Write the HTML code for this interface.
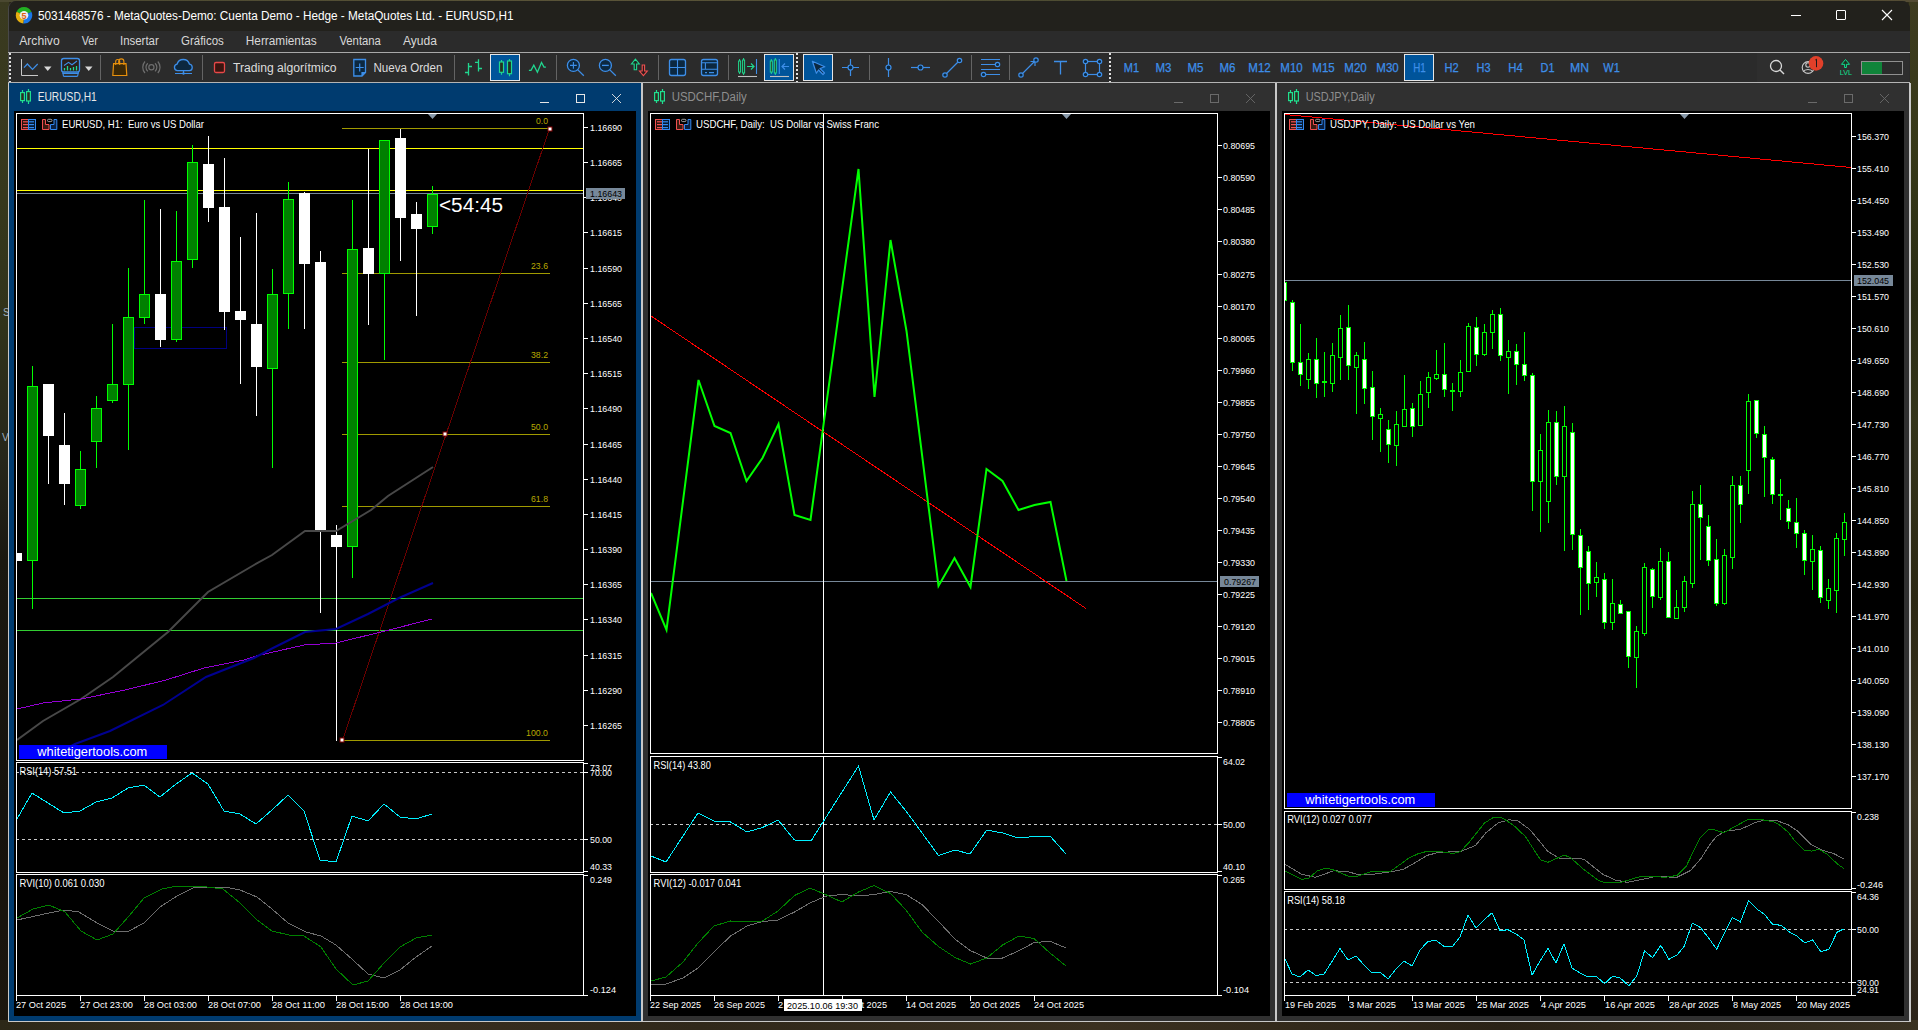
<!DOCTYPE html><html><head><meta charset="utf-8"><style>*{margin:0;padding:0;box-sizing:border-box}
html,body{width:1918px;height:1030px;overflow:hidden;background:#24231a;font-family:"Liberation Sans", sans-serif}
.a{position:absolute}
.wp{position:absolute;left:0;top:0;width:1918px;height:1030px;
background:linear-gradient(90deg,#2a2e16 0,#23260f 8px,transparent 8px,transparent 1908px,#3a3c1c 1910px,#2c2c14 1918px),linear-gradient(180deg,#46432a 0,#3a3822 2px,transparent 2px,transparent 1020px,#3a3022 1022px,#261e14 1030px),#2b2818}
.tb{color:#dcdcdc;font-size:13px;white-space:nowrap}
.mn{color:#d6d6d6;font-size:13px;white-space:nowrap}
.tf{color:#3d8ce6;font-size:14px;font-weight:bold;white-space:nowrap;text-align:center;width:32px}
svg text{font-family:"Liberation Sans", sans-serif}
</style></head><body><div class="wp"></div><div class="a" style="left:0;top:0;width:9px;height:1030px;background:linear-gradient(180deg,#3a3a20 0,#36381c 200px,#30321a 330px,#26261a 460px,#1a1810 560px,#15120c 800px,#1c160e 1030px)"></div><div class="a" style="left:1909px;top:0;width:9px;height:1030px;background:linear-gradient(180deg,#3e3c20 0,#363818 150px,#2a2c14 300px,#34341a 420px,#2c2814 600px,#3a3420 800px,#2a2218 1030px)"></div><div class="a" style="left:0;top:1020px;width:1918px;height:10px;background:linear-gradient(90deg,#2c2818 0,#3a3022 300px,#30281a 700px,#3a3020 1100px,#2a2216 1500px,#3a3222 1918px)"></div><div class="a" style="left:0;top:0;width:1918px;height:2px;background:linear-gradient(90deg,#4a4830,#5a5438 600px,#4a4a30 1200px,#544c34 1918px)"></div><svg class="a" style="left:0;top:0" width="10" height="600"><text x="3" y="316" font-size="10" fill="#a0b0c0">S</text><text x="2" y="441" font-size="10" fill="#a0b0c0">V</text></svg><div class="a" style="left:8px;top:1px;width:1902px;height:1021px;background:#2b2b2b;border-radius:8px 8px 0 0;overflow:hidden;border-left:1px solid #484848"><div class="a" style="left:0;top:0;width:1902px;height:30px;background:#22211c"></div></div><svg class="a" style="left:0;top:0" width="40" height="30"><path d="M24,15.3 L16.57,11.83 A8.2,8.2 0 0 1 31.43,11.83 Z" fill="#22b022"/><path d="M24,15.3 L31.43,11.83 A8.2,8.2 0 0 1 23.29,23.47 Z" fill="#1a78e8"/><path d="M24,15.3 L23.29,23.47 A8.2,8.2 0 0 1 16.57,11.83 Z" fill="#e8b010"/><circle cx="24" cy="15.3" r="4.3" fill="#ececec"/><text x="24" y="18.6" font-size="9" font-weight="bold" text-anchor="middle" fill="#e06010">5</text></svg><div class="a" style="left:1791px;top:15px;width:10px;height:1px;background:#fff"></div><div class="a" style="left:1836px;top:10px;width:10px;height:10px;border:1px solid #fff;border-radius:1px"></div><svg class="a" style="left:1881px;top:9px" width="12" height="12"><path d="M1,1 L11,11 M11,1 L1,11" stroke="#fff" stroke-width="1.1"/></svg><div class="a" style="left:8px;top:52px;width:1902px;height:1px;background:#a8a8a8"></div><div class="a" style="left:8px;top:82px;width:1902px;height:1px;background:#b4b4b4"></div><div class="a" style="left:1757px;top:53px;width:152px;height:29px;background:#2e2e2e"></div><svg class="a" style="left:0;top:0" width="1918" height="1030" viewBox="0 0 1918 1030"><line x1="10" y1="53" x2="10" y2="82" stroke="#e0e0e0" stroke-width="2" stroke-dasharray="2,2"/><path d="M21.5,59 V75.5 H38" fill="none" stroke="#c8c8c8" stroke-width="1"/><path d="M24,67.7 L27.4,64 L32.5,69.3 L37.7,64" fill="none" stroke="#3d8ee8" stroke-width="1.2"/><path d="M44,66.5 h7.5 l-3.75,4.5 z" fill="#d8d8d8"/><rect x="61.5" y="58.5" width="18" height="13.5" rx="2.2" fill="#2a1f1c" stroke="#3d8ee8" stroke-width="1.3"/><path d="M62.5,73.3 h16 M63.5,76.3 h14" stroke="#3d8ee8" stroke-width="1.2"/><path d="M62.8,72 L63.5,76.3 M78.5,72 L77.5,76.3" stroke="#3d8ee8" stroke-width="1.1"/><path d="M64,65.5 L68.5,62.3 L72,64.7 L77,61" fill="none" stroke="#3d8ee8" stroke-width="1.1"/><path d="M64.5,70.5v-2.5 M67.5,70.5v-4.5 M70.5,70.5v-2.5 M73.5,70.5v-3.5 M76.5,70.5v-4.5" stroke="#20d890" stroke-width="1.3"/><path d="M85,66.5 h7.5 l-3.75,4.5 z" fill="#d8d8d8"/><rect x="100" y="55" width="1" height="25" fill="#646464"/><path d="M112.8,75.5 L113.6,63.6 H126 L126.8,75.5 Z" fill="#3a2808" stroke="#e8900c" stroke-width="1.2"/><path d="M115.7,65 V61.5 a2,2 0 0 1 4,0 V65 M118.7,63.6 V61.5 a2.6,2.6 0 0 1 5.2,0 V65" fill="none" stroke="#e8900c" stroke-width="1.1"/><circle cx="151.4" cy="67.3" r="2.6" fill="none" stroke="#6e6e6e" stroke-width="1.2"/><path d="M147.8,63.2 a5.5,5.5 0 0 0 0,8.2 M155,63.2 a5.5,5.5 0 0 1 0,8.2 M145,61.5 a8.5,8.5 0 0 0 0,11.5 M157.8,61.5 a8.5,8.5 0 0 1 0,11.5" fill="none" stroke="#6e6e6e" stroke-width="1.2"/><path d="M177.5,70.7 a3.3,3.3 0 0 1 -0.5,-6.5 a6.5,6.5 0 0 1 12.5,0 a3.3,3.3 0 0 1 0,6.5 z" fill="#0c2840" stroke="#3d8ee8" stroke-width="1.3"/><path d="M183.5,70.7 v2.8 M175,73.5 h17" stroke="#3d8ee8" stroke-width="1.2"/><circle cx="183.5" cy="73.5" r="1.2" fill="#3d8ee8"/><rect x="202" y="55" width="1" height="25" fill="#646464"/><rect x="214.5" y="62.5" width="10" height="10" rx="1.5" fill="#3a1510" stroke="#e84848" stroke-width="1.3"/><path d="M353.8,59.5 h11.7 v13 l-3.5,3.5 h-8.2 z" fill="#0c2840" stroke="#3d8ee8" stroke-width="1.3"/><path d="M362,76 v-3.5 h3.5" fill="#3d8ee8" stroke="#3d8ee8" stroke-width="1.2"/><path d="M359.7,63.5 v8 M355.7,67.5 h8" stroke="#3d8ee8" stroke-width="1.2"/><rect x="454" y="55" width="1" height="25" fill="#646464"/><path d="M468.5,63 v12.6 M465,72.5 h3.5 M468.5,66.5 h3.5 M478.5,59.2 v12.3 M475,62.3 h3.5 M478.5,68.5 h3.5" stroke="#20d890" stroke-width="1.3"/><rect x="490.5" y="54.5" width="29" height="26" fill="#00549a" stroke="#e6e6e6" stroke-width="1"/><rect x="499.5" y="62" width="4" height="10.3" fill="#263020" stroke="#20d890" stroke-width="1.2"/><path d="M501.5,60v2 M501.5,72.3v2.5" stroke="#20d890" stroke-width="1.2"/><rect x="507.5" y="61" width="4" height="12.7" fill="#263020" stroke="#20d890" stroke-width="1.2"/><path d="M509.5,59v2 M509.5,73.7v2.5" stroke="#20d890" stroke-width="1.2"/><path d="M528.9,70.4 h2.1 l2.8,-5.2 l3.6,7.1 l4.1,-9.8 l2.5,4.6 h1.9" fill="none" stroke="#20d890" stroke-width="1.3"/><rect x="556" y="55" width="1" height="25" fill="#646464"/><circle cx="573.4" cy="65.4" r="6" fill="#0c2840" stroke="#3d8ee8" stroke-width="1.3"/><path d="M577.6,69.6 l6.2,6.2" stroke="#3d8ee8" stroke-width="1.3"/><path d="M570,65.4 h6.8 M573.4,62 v6.8" stroke="#3d8ee8" stroke-width="1.1"/><circle cx="605.4" cy="65.4" r="6" fill="#0c2840" stroke="#3d8ee8" stroke-width="1.3"/><path d="M609.6,69.6 l6.2,6.2" stroke="#3d8ee8" stroke-width="1.3"/><path d="M602,65.4 h6.8" stroke="#3d8ee8" stroke-width="1.3"/><path d="M634.2,69.7 V64 H631.5 L635.4,59.2 L639.3,64 H636.6 V69.7 Z" fill="#1a2a20" stroke="#20d890" stroke-width="1.1"/><path d="M642.2,65 V71 H639.5 L643.4,75.6 L647.3,71 H644.6 V65 Z" fill="#2a1a1a" stroke="#f05050" stroke-width="1.1"/><rect x="658" y="55" width="1" height="25" fill="#646464"/><rect x="669.5" y="59.5" width="16" height="16" rx="2" fill="#0c2840" stroke="#3d8ee8" stroke-width="1.3"/><path d="M677.5,60 v15 M670,67.5 h15" stroke="#3d8ee8" stroke-width="1.1"/><rect x="701.5" y="59.5" width="16" height="16" rx="2" fill="#0c2840" stroke="#3d8ee8" stroke-width="1.3"/><path d="M702,62.8 h15 M702,69.3 h15 M705.4,62.8 v6.5 M705,72.6 h2 M709,72.6 h5" stroke="#3d8ee8" stroke-width="1.1"/><rect x="728" y="55" width="1" height="25" fill="#646464"/><rect x="738.6" y="61" width="2" height="11" fill="#263020" stroke="#20d890" stroke-width="1"/><path d="M739.6,59V61 M739.6,72V74" stroke="#20d890" stroke-width="1"/><rect x="742.6" y="60" width="2" height="13" fill="#263020" stroke="#20d890" stroke-width="1"/><path d="M743.6,58V60 M743.6,73V75" stroke="#20d890" stroke-width="1"/><path d="M747,66.5h7 M751,63.5l3,3l-3,3" fill="none" stroke="#20d890" stroke-width="1.2"/><path d="M756.5,59v15" stroke="#3d8ee8" stroke-width="1.1"/><path d="M738,76.5h19" stroke="#c0c0c0" stroke-width="1.1"/><rect x="764.5" y="54.5" width="29" height="26" fill="#00549a" stroke="#e6e6e6" stroke-width="1"/><rect x="770.3" y="61" width="2" height="11" fill="#263020" stroke="#20d890" stroke-width="1"/><path d="M771.3,59V61 M771.3,72V74" stroke="#20d890" stroke-width="1"/><rect x="774.3" y="60" width="2" height="13" fill="#263020" stroke="#20d890" stroke-width="1"/><path d="M775.3,58V60 M775.3,73V75" stroke="#20d890" stroke-width="1"/><path d="M779.3,59v15" stroke="#3d8ee8" stroke-width="1.1"/><path d="M782,66.5h7 M785,63.5l-3,3l3,3" fill="none" stroke="#3d8ee8" stroke-width="1.2"/><path d="M770,76.5h19" stroke="#c0c0c0" stroke-width="1.1"/><line x1="797" y1="53" x2="797" y2="82" stroke="#e0e0e0" stroke-width="2" stroke-dasharray="2,2"/><rect x="803.5" y="54.5" width="29" height="26" fill="#00549a" stroke="#e6e6e6" stroke-width="1"/><path d="M812.4,61.3 L824.8,66.8 L820,68.5 L824.5,73 L823,74.5 L818.5,70 L816.4,73.3 Z" fill="#0c2840" stroke="#3d8ee8" stroke-width="1.2" stroke-linejoin="round"/><path d="M850.5,59v17 M842,67.5h17" stroke="#3d8ee8" stroke-width="1.2"/><circle cx="850.5" cy="67.5" r="2.5" fill="#0c2840" stroke="#3d8ee8" stroke-width="1.2"/><rect x="869" y="55" width="1" height="25" fill="#646464"/><path d="M888.5,58v19" stroke="#3d8ee8" stroke-width="1.2"/><circle cx="888.5" cy="67.5" r="2.5" fill="#0c2840" stroke="#3d8ee8" stroke-width="1.2"/><path d="M911,67.5h19" stroke="#3d8ee8" stroke-width="1.2"/><circle cx="920.5" cy="67.5" r="2.5" fill="#0c2840" stroke="#3d8ee8" stroke-width="1.2"/><path d="M945,75 L960,60" stroke="#3d8ee8" stroke-width="1.2"/><circle cx="945" cy="75" r="2.2" fill="#0c2840" stroke="#3d8ee8" stroke-width="1.2"/><circle cx="959.5" cy="60.5" r="2.2" fill="#0c2840" stroke="#3d8ee8" stroke-width="1.2"/><rect x="971" y="55" width="1" height="25" fill="#646464"/><path d="M981,59.5h19 M981,64.5h15 M981,69.5h19 M983,74.5h17" stroke="#3d8ee8" stroke-width="1.2"/><circle cx="997.5" cy="64.5" r="2.2" fill="#0c2840" stroke="#3d8ee8" stroke-width="1.2"/><circle cx="983.5" cy="74.5" r="2.2" fill="#0c2840" stroke="#3d8ee8" stroke-width="1.2"/><rect x="1009" y="55" width="1" height="25" fill="#646464"/><path d="M1021,75 L1036,60 M1030.5,61.5h4.5v4.5" fill="none" stroke="#3d8ee8" stroke-width="1.2"/><circle cx="1021" cy="75" r="2.2" fill="#0c2840" stroke="#3d8ee8" stroke-width="1.2"/><circle cx="1036" cy="60" r="2.2" fill="#0c2840" stroke="#3d8ee8" stroke-width="1.2"/><path d="M1054,61.5h13 M1060.5,61.5v13" stroke="#3d8ee8" stroke-width="1.3"/><rect x="1085.5" y="61.5" width="14" height="13" fill="none" stroke="#3d8ee8" stroke-width="1.2"/><circle cx="1085.5" cy="61.5" r="2.2" fill="#0c2840" stroke="#3d8ee8" stroke-width="1.2"/><circle cx="1099.5" cy="61.5" r="2.2" fill="#0c2840" stroke="#3d8ee8" stroke-width="1.2"/><circle cx="1085.5" cy="74.5" r="2.2" fill="#0c2840" stroke="#3d8ee8" stroke-width="1.2"/><circle cx="1099.5" cy="74.5" r="2.2" fill="#0c2840" stroke="#3d8ee8" stroke-width="1.2"/><line x1="1110" y1="53" x2="1110" y2="82" stroke="#e0e0e0" stroke-width="2" stroke-dasharray="2,2"/><rect x="1404.5" y="54.5" width="29" height="26" fill="#00549a" stroke="#e6e6e6" stroke-width="1"/><circle cx="1776" cy="66" r="5.5" fill="none" stroke="#d8d8d8" stroke-width="1.3"/><path d="M1780,70 l4,4" stroke="#d8d8d8" stroke-width="1.4"/><circle cx="1808.1" cy="67.5" r="5.9" fill="none" stroke="#c8c8c8" stroke-width="1.1"/><circle cx="1808" cy="65" r="2.2" fill="none" stroke="#c8c8c8" stroke-width="1.1"/><path d="M1803,71.8 a5.5,4 0 0 1 10,0" fill="none" stroke="#c8c8c8" stroke-width="1.1"/><circle cx="1816" cy="63.4" r="7.3" fill="#e0402a"/><path d="M1815.3,60 l1.2,-0.8 v8" fill="none" stroke="#1a1a1a" stroke-width="1"/><path d="M1844.6,67.5 V64.3 H1841.5 L1845.5,59.5 L1849.5,64.3 H1846.4 V67.5 Z" fill="#1a3020" stroke="#10e090" stroke-width="1"/><text x="1839.7" y="74.8" font-size="7.5" fill="#10e090" textLength="12.3" lengthAdjust="spacingAndGlyphs">LVL</text><rect x="1861.5" y="61.5" width="41" height="13" fill="#2b2b2b" stroke="#909090" stroke-width="1"/><rect x="1862" y="62" width="20" height="12" fill="#10843a"/></svg><div class="a" style="left:8px;top:83px;width:635px;height:939px;background:#003b6f;border-left:1px solid #c8c8c8;border-right:2px solid #c8c8c8;border-bottom:1px solid #c8c8c8"></div><div class="a" style="left:14px;top:111px;width:622px;height:905px;background:#000"></div><div class="a" style="left:643px;top:83px;width:634px;height:939px;background:#303030;border-right:2px solid #c8c8c8;border-bottom:1px solid #c8c8c8"></div><div class="a" style="left:648px;top:111px;width:622px;height:905px;background:#000"></div><div class="a" style="left:1277px;top:83px;width:634px;height:939px;background:#303030;border-right:2px solid #c8c8c8;border-bottom:1px solid #c8c8c8"></div><div class="a" style="left:1282px;top:111px;width:622px;height:905px;background:#000"></div><svg class="a" style="left:19px;top:88px" width="14" height="17"><rect x="1.6" y="4.6" width="3.8" height="8" fill="#2a3020" stroke="#20e090" stroke-width="1.2"/><path d="M3.5,2v2.6 M3.5,12.6v2.4" stroke="#20e090" stroke-width="1.2"/><rect x="7.6" y="3.6" width="3.8" height="9.4" fill="#2a3020" stroke="#20e090" stroke-width="1.2"/><path d="M9.5,1v2.6 M9.5,13v3" stroke="#20e090" stroke-width="1.2"/></svg><svg class="a" style="left:653px;top:88px" width="14" height="17"><rect x="1.6" y="4.6" width="3.8" height="8" fill="#2a3020" stroke="#20e090" stroke-width="1.2"/><path d="M3.5,2v2.6 M3.5,12.6v2.4" stroke="#20e090" stroke-width="1.2"/><rect x="7.6" y="3.6" width="3.8" height="9.4" fill="#2a3020" stroke="#20e090" stroke-width="1.2"/><path d="M9.5,1v2.6 M9.5,13v3" stroke="#20e090" stroke-width="1.2"/></svg><svg class="a" style="left:1287px;top:88px" width="14" height="17"><rect x="1.6" y="4.6" width="3.8" height="8" fill="#2a3020" stroke="#20e090" stroke-width="1.2"/><path d="M3.5,2v2.6 M3.5,12.6v2.4" stroke="#20e090" stroke-width="1.2"/><rect x="7.6" y="3.6" width="3.8" height="9.4" fill="#2a3020" stroke="#20e090" stroke-width="1.2"/><path d="M9.5,1v2.6 M9.5,13v3" stroke="#20e090" stroke-width="1.2"/></svg><svg class="a" style="left:536px;top:88px" width="90" height="18"><path d="M4,14.5h9" stroke="#e6e6e6" stroke-width="1"/><rect x="40.5" y="6.5" width="8" height="8" fill="none" stroke="#e6e6e6" stroke-width="1"/><path d="M76,6 L85,15 M85,6 L76,15" stroke="#e6e6e6" stroke-width="0.9"/></svg><svg class="a" style="left:1170px;top:88px" width="90" height="18"><path d="M4,14.5h9" stroke="#6a6a6a" stroke-width="1"/><rect x="40.5" y="6.5" width="8" height="8" fill="none" stroke="#6a6a6a" stroke-width="1"/><path d="M76,6 L85,15 M85,6 L76,15" stroke="#6a6a6a" stroke-width="0.9"/></svg><svg class="a" style="left:1804px;top:88px" width="90" height="18"><path d="M4,14.5h9" stroke="#6a6a6a" stroke-width="1"/><rect x="40.5" y="6.5" width="8" height="8" fill="none" stroke="#6a6a6a" stroke-width="1"/><path d="M76,6 L85,15 M85,6 L76,15" stroke="#6a6a6a" stroke-width="0.9"/></svg><svg class="a" style="left:0;top:0" width="1918" height="1030" viewBox="0 0 1918 1030" shape-rendering="auto"><rect x="16" y="113" width="568" height="1" fill="#ffffff" /><rect x="16" y="760" width="568" height="1" fill="#ffffff" /><rect x="16" y="113" width="1" height="648" fill="#ffffff" /><rect x="583" y="113" width="1" height="648" fill="#ffffff" /><rect x="16" y="762" width="568" height="1" fill="#ffffff" /><rect x="16" y="872" width="568" height="1" fill="#ffffff" /><rect x="16" y="762" width="1" height="111" fill="#ffffff" /><rect x="583" y="762" width="1" height="111" fill="#ffffff" /><rect x="16" y="874" width="568" height="1" fill="#ffffff" /><rect x="16" y="995" width="568" height="1" fill="#ffffff" /><rect x="16" y="874" width="1" height="122" fill="#ffffff" /><rect x="583" y="874" width="1" height="122" fill="#ffffff" /><clipPath id="ce"><rect x="17" y="114" width="566" height="646"/></clipPath><g clip-path="url(#ce)"><rect x="17" y="148" width="566" height="1" fill="#ffff00" /><rect x="17" y="190" width="566" height="1" fill="#ffff00" /><rect x="17" y="193" width="566" height="1" fill="#778899" /><rect x="17" y="598" width="566" height="1" fill="#32cd32" /><rect x="17" y="630" width="566" height="1" fill="#32cd32" /><rect x="134.5" y="327.5" width="92" height="21" fill="none" stroke="#000080" stroke-width="1"/><rect x="342" y="128" width="208" height="1" fill="#a09a00" /><rect x="342" y="273" width="208" height="1" fill="#a09a00" /><rect x="342" y="362" width="208" height="1" fill="#a09a00" /><rect x="342" y="434" width="208" height="1" fill="#a09a00" /><rect x="342" y="506" width="208" height="1" fill="#a09a00" /><rect x="342" y="740" width="208" height="1" fill="#a09a00" /><line x1="549.5" y1="128.5" x2="342.5" y2="740.5" stroke="#6a0000" stroke-width="1" shape-rendering="crispEdges"/><rect x="16" y="553" width="1" height="8" fill="#ffffff" /><rect x="11" y="553" width="11" height="8" fill="#ffffff" /><rect x="32" y="366" width="1" height="243" fill="#00ff00" /><rect x="27" y="386" width="11" height="175" fill="#00ff00" /><rect x="28" y="387" width="9" height="173" fill="#008000" /><rect x="48" y="384" width="1" height="100" fill="#ffffff" /><rect x="43" y="384" width="11" height="52" fill="#ffffff" /><rect x="64" y="413" width="1" height="92" fill="#ffffff" /><rect x="59" y="445" width="11" height="39" fill="#ffffff" /><rect x="80" y="451" width="1" height="58" fill="#00ff00" /><rect x="75" y="469" width="11" height="37" fill="#00ff00" /><rect x="76" y="470" width="9" height="35" fill="#008000" /><rect x="96" y="396" width="1" height="72" fill="#00ff00" /><rect x="91" y="408" width="11" height="34" fill="#00ff00" /><rect x="92" y="409" width="9" height="32" fill="#008000" /><rect x="112" y="324" width="1" height="79" fill="#00ff00" /><rect x="107" y="384" width="11" height="17" fill="#00ff00" /><rect x="108" y="385" width="9" height="15" fill="#008000" /><rect x="128" y="268" width="1" height="182" fill="#00ff00" /><rect x="123" y="317" width="11" height="68" fill="#00ff00" /><rect x="124" y="318" width="9" height="66" fill="#008000" /><rect x="144" y="200" width="1" height="124" fill="#00ff00" /><rect x="139" y="294" width="11" height="24" fill="#00ff00" /><rect x="140" y="295" width="9" height="22" fill="#008000" /><rect x="160" y="209" width="1" height="138" fill="#ffffff" /><rect x="155" y="294" width="11" height="46" fill="#ffffff" /><rect x="176" y="211" width="1" height="131" fill="#00ff00" /><rect x="171" y="261" width="11" height="79" fill="#00ff00" /><rect x="172" y="262" width="9" height="77" fill="#008000" /><rect x="192" y="145" width="1" height="123" fill="#00ff00" /><rect x="187" y="162" width="11" height="98" fill="#00ff00" /><rect x="188" y="163" width="9" height="96" fill="#008000" /><rect x="208" y="136" width="1" height="86" fill="#ffffff" /><rect x="203" y="164" width="11" height="44" fill="#ffffff" /><rect x="224" y="158" width="1" height="172" fill="#ffffff" /><rect x="219" y="207" width="11" height="105" fill="#ffffff" /><rect x="240" y="237" width="1" height="147" fill="#ffffff" /><rect x="235" y="311" width="11" height="9" fill="#ffffff" /><rect x="256" y="213" width="1" height="203" fill="#ffffff" /><rect x="251" y="324" width="11" height="43" fill="#ffffff" /><rect x="272" y="269" width="1" height="199" fill="#00ff00" /><rect x="267" y="294" width="11" height="75" fill="#00ff00" /><rect x="268" y="295" width="9" height="73" fill="#008000" /><rect x="288" y="182" width="1" height="147" fill="#00ff00" /><rect x="283" y="199" width="11" height="95" fill="#00ff00" /><rect x="284" y="200" width="9" height="93" fill="#008000" /><rect x="304" y="192" width="1" height="137" fill="#ffffff" /><rect x="299" y="193" width="11" height="71" fill="#ffffff" /><rect x="320" y="251" width="1" height="362" fill="#ffffff" /><rect x="315" y="262" width="11" height="268" fill="#ffffff" /><rect x="336" y="525" width="1" height="216" fill="#ffffff" /><rect x="331" y="535" width="11" height="12" fill="#ffffff" /><rect x="352" y="200" width="1" height="378" fill="#00ff00" /><rect x="347" y="249" width="11" height="298" fill="#00ff00" /><rect x="348" y="250" width="9" height="296" fill="#008000" /><rect x="368" y="149" width="1" height="176" fill="#ffffff" /><rect x="363" y="248" width="11" height="26" fill="#ffffff" /><rect x="384" y="140" width="1" height="220" fill="#00ff00" /><rect x="379" y="140" width="11" height="134" fill="#00ff00" /><rect x="380" y="141" width="9" height="132" fill="#008000" /><rect x="400" y="129" width="1" height="132" fill="#ffffff" /><rect x="395" y="138" width="11" height="80" fill="#ffffff" /><rect x="416" y="202" width="1" height="114" fill="#ffffff" /><rect x="411" y="214" width="11" height="15" fill="#ffffff" /><rect x="432" y="186" width="1" height="48" fill="#00ff00" /><rect x="427" y="194" width="11" height="33" fill="#00ff00" /><rect x="428" y="195" width="9" height="31" fill="#008000" /><polyline points="17,740 43,721 81,699 113,677 168,632 208,592 254,565 272,555 305,531 336,531 371,510 388,496 433,467" fill="none" stroke="#484848" stroke-width="2" stroke-linejoin="miter" /><polyline points="17,709 43,703 81,699 125,690 166,680 204,668 244,660 256,656 304,645 336,643 385,631 432,619" fill="none" stroke="#9400d3" stroke-width="1" stroke-linejoin="miter" shape-rendering="crispEdges"/><polyline points="60,752 75,744 110,731 163,705 206,677 254,658 273,648 305,632 336,629 368,614 399,598 433,583" fill="none" stroke="#000090" stroke-width="2" stroke-linejoin="miter" /><rect x="548" y="127" width="4" height="4" fill="#ffffff" stroke="#800000" stroke-width="1"/><rect x="443" y="432" width="4" height="4" fill="#ffffff" stroke="#800000" stroke-width="1"/><rect x="340" y="738" width="4" height="4" fill="#ffffff" stroke="#800000" stroke-width="1"/><text x="548" y="124" fill="#b8a800" font-size="9.8" text-anchor="end" textLength="12" lengthAdjust="spacingAndGlyphs" xml:space="preserve" >0.0</text><text x="548" y="269" fill="#b8a800" font-size="9.8" text-anchor="end" textLength="17" lengthAdjust="spacingAndGlyphs" xml:space="preserve" >23.6</text><text x="548" y="358" fill="#b8a800" font-size="9.8" text-anchor="end" textLength="17" lengthAdjust="spacingAndGlyphs" xml:space="preserve" >38.2</text><text x="548" y="430" fill="#b8a800" font-size="9.8" text-anchor="end" textLength="17" lengthAdjust="spacingAndGlyphs" xml:space="preserve" >50.0</text><text x="548" y="502" fill="#b8a800" font-size="9.8" text-anchor="end" textLength="17" lengthAdjust="spacingAndGlyphs" xml:space="preserve" >61.8</text><text x="548" y="736" fill="#b8a800" font-size="9.8" text-anchor="end" textLength="22" lengthAdjust="spacingAndGlyphs" xml:space="preserve" >100.0</text><text x="439" y="212" fill="#ffffff" font-size="20.5" text-anchor="start" textLength="64" lengthAdjust="spacingAndGlyphs" xml:space="preserve" >&lt;54:45</text><rect x="19" y="745" width="148" height="14" fill="#0000ff" /><text x="37.3" y="756" fill="#ffffff" font-size="12.5" text-anchor="start" textLength="110" lengthAdjust="spacingAndGlyphs" xml:space="preserve" >whitetigertools.com</text><g transform="translate(21,119)"><rect x="0.5" y="0.5" width="7" height="10" fill="#2a1410" stroke="#f05050"/><rect x="7.5" y="0.5" width="7" height="10" fill="#061a30" stroke="#3388f0"/><rect x="2" y="2.2" width="5" height="1.2" fill="#f05050"/><rect x="2" y="5" width="5" height="1.2" fill="#f05050"/><rect x="2" y="8" width="5" height="1.2" fill="#f05050"/><rect x="8" y="2.2" width="5" height="1.2" fill="#3388f0"/><rect x="8" y="5" width="5" height="1.2" fill="#3388f0"/><rect x="8" y="8" width="5" height="1.2" fill="#3388f0"/><path d="M21.5,0.5 h3 v5 h3.5 v5 h-6.5 z" fill="#3a1a10" stroke="#f05050"/><path d="M29.5,10.5 v-5 h3.5 v-5 h2.8 v10 z" fill="#0a2040" stroke="#3388f0"/><rect x="26.5" y="0.3" width="4.5" height="2.3" rx="1.1" fill="none" stroke="#b0b0b0" stroke-width="0.9"/></g><text x="62" y="128" fill="#ffffff" font-size="10.5" text-anchor="start" textLength="142" lengthAdjust="spacingAndGlyphs" xml:space="preserve" >EURUSD, H1:  Euro vs US Dollar</text><polygon points="428,114 437,114 432.5,119" fill="#8899aa"/></g><rect x="584" y="127" width="4" height="1" fill="#ffffff" /><text x="590" y="131" fill="#ffffff" font-size="9.8" text-anchor="start" textLength="32" lengthAdjust="spacingAndGlyphs" xml:space="preserve" >1.16690</text><rect x="584" y="162" width="4" height="1" fill="#ffffff" /><text x="590" y="166" fill="#ffffff" font-size="9.8" text-anchor="start" textLength="32" lengthAdjust="spacingAndGlyphs" xml:space="preserve" >1.16665</text><rect x="584" y="197" width="4" height="1" fill="#ffffff" /><text x="590" y="201" fill="#ffffff" font-size="9.8" text-anchor="start" textLength="32" lengthAdjust="spacingAndGlyphs" xml:space="preserve" >1.16640</text><rect x="584" y="232" width="4" height="1" fill="#ffffff" /><text x="590" y="236" fill="#ffffff" font-size="9.8" text-anchor="start" textLength="32" lengthAdjust="spacingAndGlyphs" xml:space="preserve" >1.16615</text><rect x="584" y="268" width="4" height="1" fill="#ffffff" /><text x="590" y="272" fill="#ffffff" font-size="9.8" text-anchor="start" textLength="32" lengthAdjust="spacingAndGlyphs" xml:space="preserve" >1.16590</text><rect x="584" y="303" width="4" height="1" fill="#ffffff" /><text x="590" y="307" fill="#ffffff" font-size="9.8" text-anchor="start" textLength="32" lengthAdjust="spacingAndGlyphs" xml:space="preserve" >1.16565</text><rect x="584" y="338" width="4" height="1" fill="#ffffff" /><text x="590" y="342" fill="#ffffff" font-size="9.8" text-anchor="start" textLength="32" lengthAdjust="spacingAndGlyphs" xml:space="preserve" >1.16540</text><rect x="584" y="373" width="4" height="1" fill="#ffffff" /><text x="590" y="377" fill="#ffffff" font-size="9.8" text-anchor="start" textLength="32" lengthAdjust="spacingAndGlyphs" xml:space="preserve" >1.16515</text><rect x="584" y="408" width="4" height="1" fill="#ffffff" /><text x="590" y="412" fill="#ffffff" font-size="9.8" text-anchor="start" textLength="32" lengthAdjust="spacingAndGlyphs" xml:space="preserve" >1.16490</text><rect x="584" y="444" width="4" height="1" fill="#ffffff" /><text x="590" y="448" fill="#ffffff" font-size="9.8" text-anchor="start" textLength="32" lengthAdjust="spacingAndGlyphs" xml:space="preserve" >1.16465</text><rect x="584" y="479" width="4" height="1" fill="#ffffff" /><text x="590" y="483" fill="#ffffff" font-size="9.8" text-anchor="start" textLength="32" lengthAdjust="spacingAndGlyphs" xml:space="preserve" >1.16440</text><rect x="584" y="514" width="4" height="1" fill="#ffffff" /><text x="590" y="518" fill="#ffffff" font-size="9.8" text-anchor="start" textLength="32" lengthAdjust="spacingAndGlyphs" xml:space="preserve" >1.16415</text><rect x="584" y="549" width="4" height="1" fill="#ffffff" /><text x="590" y="553" fill="#ffffff" font-size="9.8" text-anchor="start" textLength="32" lengthAdjust="spacingAndGlyphs" xml:space="preserve" >1.16390</text><rect x="584" y="584" width="4" height="1" fill="#ffffff" /><text x="590" y="588" fill="#ffffff" font-size="9.8" text-anchor="start" textLength="32" lengthAdjust="spacingAndGlyphs" xml:space="preserve" >1.16365</text><rect x="584" y="619" width="4" height="1" fill="#ffffff" /><text x="590" y="623" fill="#ffffff" font-size="9.8" text-anchor="start" textLength="32" lengthAdjust="spacingAndGlyphs" xml:space="preserve" >1.16340</text><rect x="584" y="655" width="4" height="1" fill="#ffffff" /><text x="590" y="659" fill="#ffffff" font-size="9.8" text-anchor="start" textLength="32" lengthAdjust="spacingAndGlyphs" xml:space="preserve" >1.16315</text><rect x="584" y="690" width="4" height="1" fill="#ffffff" /><text x="590" y="694" fill="#ffffff" font-size="9.8" text-anchor="start" textLength="32" lengthAdjust="spacingAndGlyphs" xml:space="preserve" >1.16290</text><rect x="584" y="725" width="4" height="1" fill="#ffffff" /><text x="590" y="729" fill="#ffffff" font-size="9.8" text-anchor="start" textLength="32" lengthAdjust="spacingAndGlyphs" xml:space="preserve" >1.16265</text><rect x="586" y="188" width="39" height="11" fill="#778899" /><text x="590" y="197" fill="#000000" font-size="9.8" text-anchor="start" textLength="32" lengthAdjust="spacingAndGlyphs" xml:space="preserve" >1.16643</text><clipPath id="cer"><rect x="17" y="763" width="566" height="109"/></clipPath><g clip-path="url(#cer)"><line x1="16" y1="772.5" x2="583" y2="772.5" stroke="#c8c8c8" stroke-width="1" stroke-dasharray="3,3"/><line x1="16" y1="839.5" x2="583" y2="839.5" stroke="#c8c8c8" stroke-width="1" stroke-dasharray="3,3"/><polyline points="17,819 32,793 48,803 64,813 80,811 96,802 112,798 128,788 144,785 160,797 176,784 192,773 208,784 224,811 240,814 256,824 272,810 288,795 304,811 320,860 336,862 352,816 368,821 384,804 400,817 416,819 432,814" fill="none" stroke="#00f0ff" stroke-width="1" stroke-linejoin="miter" shape-rendering="crispEdges"/><text x="19.5" y="775" fill="#ffffff" font-size="10.5" text-anchor="start" textLength="57.5" lengthAdjust="spacingAndGlyphs" xml:space="preserve" >RSI(14) 57.51</text></g><rect x="584" y="763" width="4" height="1" fill="#ffffff" /><rect x="584" y="772" width="4" height="1" fill="#ffffff" /><rect x="584" y="839" width="4" height="1" fill="#ffffff" /><rect x="584" y="871" width="4" height="1" fill="#ffffff" /><text x="590" y="771" fill="#ffffff" font-size="9.8" text-anchor="start" textLength="22" lengthAdjust="spacingAndGlyphs" xml:space="preserve" >73.07</text><text x="590" y="776" fill="#ffffff" font-size="9.8" text-anchor="start" textLength="22" lengthAdjust="spacingAndGlyphs" xml:space="preserve" >70.00</text><text x="590" y="843" fill="#ffffff" font-size="9.8" text-anchor="start" textLength="22" lengthAdjust="spacingAndGlyphs" xml:space="preserve" >50.00</text><text x="590" y="870" fill="#ffffff" font-size="9.8" text-anchor="start" textLength="22" lengthAdjust="spacingAndGlyphs" xml:space="preserve" >40.33</text><clipPath id="cev"><rect x="17" y="875" width="566" height="120"/></clipPath><g clip-path="url(#cev)"><polyline points="17,920 49,913 64,910 79,912 97,923 113,931 127,932 144,923 160,907 177,896 193,888 208,887 225,887 240,890 257,897 272,909 288,923 306,932 321,936 336,945 353,960 368,974 384,978 400,970 416,957 432,946" fill="none" stroke="#6e6e6e" stroke-width="1" stroke-linejoin="miter" shape-rendering="crispEdges"/><polyline points="17,918 33,909 49,905 65,912 81,931 97,940 113,934 129,916 144,898 162,889 177,886 199,886 223,889 240,903 257,920 272,931 289,935 304,936 321,947 336,969 353,985 368,981 384,963 400,947 416,938 432,935" fill="none" stroke="#008000" stroke-width="1" stroke-linejoin="miter" shape-rendering="crispEdges"/><text x="19.5" y="887" fill="#ffffff" font-size="10.5" text-anchor="start" textLength="85" lengthAdjust="spacingAndGlyphs" xml:space="preserve" >RVI(10) 0.061 0.030</text></g><rect x="584" y="875" width="4" height="1" fill="#ffffff" /><rect x="584" y="995" width="4" height="1" fill="#ffffff" /><text x="590" y="883" fill="#ffffff" font-size="9.8" text-anchor="start" textLength="22" lengthAdjust="spacingAndGlyphs" xml:space="preserve" >0.249</text><text x="590" y="993" fill="#ffffff" font-size="9.8" text-anchor="start" textLength="26" lengthAdjust="spacingAndGlyphs" xml:space="preserve" >-0.124</text><rect x="16" y="995" width="1" height="6" fill="#ffffff" /><text x="16" y="1008" fill="#ffffff" font-size="9.8" text-anchor="start" textLength="50" lengthAdjust="spacingAndGlyphs" xml:space="preserve" >27 Oct 2025</text><rect x="80" y="995" width="1" height="6" fill="#ffffff" /><text x="80" y="1008" fill="#ffffff" font-size="9.8" text-anchor="start" textLength="53" lengthAdjust="spacingAndGlyphs" xml:space="preserve" >27 Oct 23:00</text><rect x="144" y="995" width="1" height="6" fill="#ffffff" /><text x="144" y="1008" fill="#ffffff" font-size="9.8" text-anchor="start" textLength="53" lengthAdjust="spacingAndGlyphs" xml:space="preserve" >28 Oct 03:00</text><rect x="208" y="995" width="1" height="6" fill="#ffffff" /><text x="208" y="1008" fill="#ffffff" font-size="9.8" text-anchor="start" textLength="53" lengthAdjust="spacingAndGlyphs" xml:space="preserve" >28 Oct 07:00</text><rect x="272" y="995" width="1" height="6" fill="#ffffff" /><text x="272" y="1008" fill="#ffffff" font-size="9.8" text-anchor="start" textLength="53" lengthAdjust="spacingAndGlyphs" xml:space="preserve" >28 Oct 11:00</text><rect x="336" y="995" width="1" height="6" fill="#ffffff" /><text x="336" y="1008" fill="#ffffff" font-size="9.8" text-anchor="start" textLength="53" lengthAdjust="spacingAndGlyphs" xml:space="preserve" >28 Oct 15:00</text><rect x="400" y="995" width="1" height="6" fill="#ffffff" /><text x="400" y="1008" fill="#ffffff" font-size="9.8" text-anchor="start" textLength="53" lengthAdjust="spacingAndGlyphs" xml:space="preserve" >28 Oct 19:00</text><rect x="650" y="113" width="568" height="1" fill="#ffffff" /><rect x="650" y="753" width="568" height="1" fill="#ffffff" /><rect x="650" y="113" width="1" height="641" fill="#ffffff" /><rect x="1217" y="113" width="1" height="641" fill="#ffffff" /><rect x="650" y="756" width="568" height="1" fill="#ffffff" /><rect x="650" y="872" width="568" height="1" fill="#ffffff" /><rect x="650" y="756" width="1" height="117" fill="#ffffff" /><rect x="1217" y="756" width="1" height="117" fill="#ffffff" /><rect x="650" y="874" width="568" height="1" fill="#ffffff" /><rect x="650" y="995" width="568" height="1" fill="#ffffff" /><rect x="650" y="874" width="1" height="122" fill="#ffffff" /><rect x="1217" y="874" width="1" height="122" fill="#ffffff" /><clipPath id="cc"><rect x="651" y="114" width="566" height="639"/></clipPath><g clip-path="url(#cc)"><rect x="651" y="581" width="566" height="1" fill="#778899" /><rect x="823" y="114" width="1" height="640" fill="#ffffff" /><line x1="651" y1="316" x2="1086" y2="608.5" stroke="#ff0000" stroke-width="1" shape-rendering="crispEdges"/><polyline points="651,593 666.5,630 698.5,380 714.5,426 730.5,433 746.5,481 762.5,458 778.5,424 794.5,515 810.5,520 858.5,169 874.5,397 890.5,240 906.5,331 938.5,586 954.5,558 970.5,587 986.5,469 1002.5,481 1018.5,510 1034.5,505 1050.5,502 1066.5,581" fill="none" stroke="#00ff00" stroke-width="2" stroke-linejoin="miter" /><g transform="translate(655,119)"><rect x="0.5" y="0.5" width="7" height="10" fill="#2a1410" stroke="#f05050"/><rect x="7.5" y="0.5" width="7" height="10" fill="#061a30" stroke="#3388f0"/><rect x="2" y="2.2" width="5" height="1.2" fill="#f05050"/><rect x="2" y="5" width="5" height="1.2" fill="#f05050"/><rect x="2" y="8" width="5" height="1.2" fill="#f05050"/><rect x="8" y="2.2" width="5" height="1.2" fill="#3388f0"/><rect x="8" y="5" width="5" height="1.2" fill="#3388f0"/><rect x="8" y="8" width="5" height="1.2" fill="#3388f0"/><path d="M21.5,0.5 h3 v5 h3.5 v5 h-6.5 z" fill="#3a1a10" stroke="#f05050"/><path d="M29.5,10.5 v-5 h3.5 v-5 h2.8 v10 z" fill="#0a2040" stroke="#3388f0"/><rect x="26.5" y="0.3" width="4.5" height="2.3" rx="1.1" fill="none" stroke="#b0b0b0" stroke-width="0.9"/></g><text x="696" y="128" fill="#ffffff" font-size="10.5" text-anchor="start" textLength="183" lengthAdjust="spacingAndGlyphs" xml:space="preserve" >USDCHF, Daily:  US Dollar vs Swiss Franc</text><polygon points="1062,114 1071,114 1066.5,119" fill="#8899aa"/></g><rect x="1218" y="145" width="4" height="1" fill="#ffffff" /><text x="1223" y="149" fill="#ffffff" font-size="9.8" text-anchor="start" textLength="32" lengthAdjust="spacingAndGlyphs" xml:space="preserve" >0.80695</text><rect x="1218" y="177" width="4" height="1" fill="#ffffff" /><text x="1223" y="181" fill="#ffffff" font-size="9.8" text-anchor="start" textLength="32" lengthAdjust="spacingAndGlyphs" xml:space="preserve" >0.80590</text><rect x="1218" y="209" width="4" height="1" fill="#ffffff" /><text x="1223" y="213" fill="#ffffff" font-size="9.8" text-anchor="start" textLength="32" lengthAdjust="spacingAndGlyphs" xml:space="preserve" >0.80485</text><rect x="1218" y="241" width="4" height="1" fill="#ffffff" /><text x="1223" y="245" fill="#ffffff" font-size="9.8" text-anchor="start" textLength="32" lengthAdjust="spacingAndGlyphs" xml:space="preserve" >0.80380</text><rect x="1218" y="274" width="4" height="1" fill="#ffffff" /><text x="1223" y="278" fill="#ffffff" font-size="9.8" text-anchor="start" textLength="32" lengthAdjust="spacingAndGlyphs" xml:space="preserve" >0.80275</text><rect x="1218" y="306" width="4" height="1" fill="#ffffff" /><text x="1223" y="310" fill="#ffffff" font-size="9.8" text-anchor="start" textLength="32" lengthAdjust="spacingAndGlyphs" xml:space="preserve" >0.80170</text><rect x="1218" y="338" width="4" height="1" fill="#ffffff" /><text x="1223" y="342" fill="#ffffff" font-size="9.8" text-anchor="start" textLength="32" lengthAdjust="spacingAndGlyphs" xml:space="preserve" >0.80065</text><rect x="1218" y="370" width="4" height="1" fill="#ffffff" /><text x="1223" y="374" fill="#ffffff" font-size="9.8" text-anchor="start" textLength="32" lengthAdjust="spacingAndGlyphs" xml:space="preserve" >0.79960</text><rect x="1218" y="402" width="4" height="1" fill="#ffffff" /><text x="1223" y="406" fill="#ffffff" font-size="9.8" text-anchor="start" textLength="32" lengthAdjust="spacingAndGlyphs" xml:space="preserve" >0.79855</text><rect x="1218" y="434" width="4" height="1" fill="#ffffff" /><text x="1223" y="438" fill="#ffffff" font-size="9.8" text-anchor="start" textLength="32" lengthAdjust="spacingAndGlyphs" xml:space="preserve" >0.79750</text><rect x="1218" y="466" width="4" height="1" fill="#ffffff" /><text x="1223" y="470" fill="#ffffff" font-size="9.8" text-anchor="start" textLength="32" lengthAdjust="spacingAndGlyphs" xml:space="preserve" >0.79645</text><rect x="1218" y="498" width="4" height="1" fill="#ffffff" /><text x="1223" y="502" fill="#ffffff" font-size="9.8" text-anchor="start" textLength="32" lengthAdjust="spacingAndGlyphs" xml:space="preserve" >0.79540</text><rect x="1218" y="530" width="4" height="1" fill="#ffffff" /><text x="1223" y="534" fill="#ffffff" font-size="9.8" text-anchor="start" textLength="32" lengthAdjust="spacingAndGlyphs" xml:space="preserve" >0.79435</text><rect x="1218" y="562" width="4" height="1" fill="#ffffff" /><text x="1223" y="566" fill="#ffffff" font-size="9.8" text-anchor="start" textLength="32" lengthAdjust="spacingAndGlyphs" xml:space="preserve" >0.79330</text><rect x="1218" y="594" width="4" height="1" fill="#ffffff" /><text x="1223" y="598" fill="#ffffff" font-size="9.8" text-anchor="start" textLength="32" lengthAdjust="spacingAndGlyphs" xml:space="preserve" >0.79225</text><rect x="1218" y="626" width="4" height="1" fill="#ffffff" /><text x="1223" y="630" fill="#ffffff" font-size="9.8" text-anchor="start" textLength="32" lengthAdjust="spacingAndGlyphs" xml:space="preserve" >0.79120</text><rect x="1218" y="658" width="4" height="1" fill="#ffffff" /><text x="1223" y="662" fill="#ffffff" font-size="9.8" text-anchor="start" textLength="32" lengthAdjust="spacingAndGlyphs" xml:space="preserve" >0.79015</text><rect x="1218" y="690" width="4" height="1" fill="#ffffff" /><text x="1223" y="694" fill="#ffffff" font-size="9.8" text-anchor="start" textLength="32" lengthAdjust="spacingAndGlyphs" xml:space="preserve" >0.78910</text><rect x="1218" y="722" width="4" height="1" fill="#ffffff" /><text x="1223" y="726" fill="#ffffff" font-size="9.8" text-anchor="start" textLength="32" lengthAdjust="spacingAndGlyphs" xml:space="preserve" >0.78805</text><rect x="1220" y="576" width="39" height="11" fill="#778899" /><text x="1224" y="585" fill="#000000" font-size="9.8" text-anchor="start" textLength="32" lengthAdjust="spacingAndGlyphs" xml:space="preserve" >0.79267</text><clipPath id="ccr"><rect x="651" y="757" width="566" height="115"/></clipPath><g clip-path="url(#ccr)"><rect x="823" y="757" width="1" height="116" fill="#ffffff" /><line x1="650" y1="824.5" x2="1217" y2="824.5" stroke="#c8c8c8" stroke-width="1" stroke-dasharray="3,3"/><polyline points="651,856 666,862 698,813 714,821 730.5,822 747,832 762.5,827.5 778,820 794.5,840 811,841 858.5,766 874,820 890.5,792 906,811 938.5,855.5 955,850 970,854 986.8,830 1002.6,833 1018,838 1034,836.5 1050,836 1066,854" fill="none" stroke="#00f0ff" stroke-width="1" stroke-linejoin="miter" shape-rendering="crispEdges"/><text x="653.5" y="769" fill="#ffffff" font-size="10.5" text-anchor="start" textLength="57.3" lengthAdjust="spacingAndGlyphs" xml:space="preserve" >RSI(14) 43.80</text></g><rect x="1218" y="757" width="4" height="1" fill="#ffffff" /><rect x="1218" y="824" width="4" height="1" fill="#ffffff" /><rect x="1218" y="871" width="4" height="1" fill="#ffffff" /><text x="1223" y="765" fill="#ffffff" font-size="9.8" text-anchor="start" textLength="22" lengthAdjust="spacingAndGlyphs" xml:space="preserve" >64.02</text><text x="1223" y="828" fill="#ffffff" font-size="9.8" text-anchor="start" textLength="22" lengthAdjust="spacingAndGlyphs" xml:space="preserve" >50.00</text><text x="1223" y="870" fill="#ffffff" font-size="9.8" text-anchor="start" textLength="22" lengthAdjust="spacingAndGlyphs" xml:space="preserve" >40.10</text><clipPath id="ccv"><rect x="651" y="875" width="566" height="120"/></clipPath><g clip-path="url(#ccv)"><rect x="823" y="875" width="1" height="121" fill="#ffffff" /><polyline points="651,985 666,984 683,978 698,968 714,952 730.5,936 747,926 762.5,921.5 778,920 794.5,912 810,903 826.5,896 842,894.5 858.5,896 874,894.5 890.5,891.5 906,894.5 922,904.5 938.5,921.5 955,939 970.5,950.7 986.8,958 1002.6,958 1019,950.7 1034,942.6 1050,941.2 1066,948" fill="none" stroke="#6e6e6e" stroke-width="1" stroke-linejoin="miter" shape-rendering="crispEdges"/><polyline points="651,981 666,977 683,962 698,943 714,926 730.5,921 747,922 762.5,921 778,911 794.5,895.5 810,888 826.5,895 842,902 858.5,892 874,885.5 890.5,893.5 906,910 922,932 938.5,946.5 955,957.5 970.5,964 986.8,958 1002.6,945 1019,936 1034,938.5 1050,953 1066,966" fill="none" stroke="#008000" stroke-width="1" stroke-linejoin="miter" shape-rendering="crispEdges"/><text x="653.5" y="887" fill="#ffffff" font-size="10.5" text-anchor="start" textLength="87.8" lengthAdjust="spacingAndGlyphs" xml:space="preserve" >RVI(12) -0.017 0.041</text></g><rect x="1218" y="875" width="4" height="1" fill="#ffffff" /><rect x="1218" y="995" width="4" height="1" fill="#ffffff" /><text x="1223" y="883" fill="#ffffff" font-size="9.8" text-anchor="start" textLength="22" lengthAdjust="spacingAndGlyphs" xml:space="preserve" >0.265</text><text x="1223" y="993" fill="#ffffff" font-size="9.8" text-anchor="start" textLength="26" lengthAdjust="spacingAndGlyphs" xml:space="preserve" >-0.104</text><rect x="650" y="995" width="1" height="6" fill="#ffffff" /><text x="650" y="1008" fill="#ffffff" font-size="9.8" text-anchor="start" textLength="51" lengthAdjust="spacingAndGlyphs" xml:space="preserve" >22 Sep 2025</text><rect x="714" y="995" width="1" height="6" fill="#ffffff" /><text x="714" y="1008" fill="#ffffff" font-size="9.8" text-anchor="start" textLength="51" lengthAdjust="spacingAndGlyphs" xml:space="preserve" >26 Sep 2025</text><rect x="778" y="995" width="1" height="6" fill="#ffffff" /><text x="778" y="1008" fill="#ffffff" font-size="9.8" text-anchor="start" textLength="45" lengthAdjust="spacingAndGlyphs" xml:space="preserve" >2 Oct 2025</text><rect x="842" y="995" width="1" height="6" fill="#ffffff" /><text x="842" y="1008" fill="#ffffff" font-size="9.8" text-anchor="start" textLength="45" lengthAdjust="spacingAndGlyphs" xml:space="preserve" >8 Oct 2025</text><rect x="906" y="995" width="1" height="6" fill="#ffffff" /><text x="906" y="1008" fill="#ffffff" font-size="9.8" text-anchor="start" textLength="50" lengthAdjust="spacingAndGlyphs" xml:space="preserve" >14 Oct 2025</text><rect x="970" y="995" width="1" height="6" fill="#ffffff" /><text x="970" y="1008" fill="#ffffff" font-size="9.8" text-anchor="start" textLength="50" lengthAdjust="spacingAndGlyphs" xml:space="preserve" >20 Oct 2025</text><rect x="1034" y="995" width="1" height="6" fill="#ffffff" /><text x="1034" y="1008" fill="#ffffff" font-size="9.8" text-anchor="start" textLength="50" lengthAdjust="spacingAndGlyphs" xml:space="preserve" >24 Oct 2025</text><rect x="784" y="999" width="78" height="12" fill="#ffffff" /><text x="787" y="1009" fill="#000000" font-size="9.8" text-anchor="start" textLength="71" lengthAdjust="spacingAndGlyphs" xml:space="preserve" >2025.10.06 19:30</text><rect x="1284" y="113" width="568" height="1" fill="#ffffff" /><rect x="1284" y="808" width="568" height="1" fill="#ffffff" /><rect x="1284" y="113" width="1" height="696" fill="#ffffff" /><rect x="1851" y="113" width="1" height="696" fill="#ffffff" /><rect x="1284" y="811" width="568" height="1" fill="#ffffff" /><rect x="1284" y="889" width="568" height="1" fill="#ffffff" /><rect x="1284" y="811" width="1" height="79" fill="#ffffff" /><rect x="1851" y="811" width="1" height="79" fill="#ffffff" /><rect x="1284" y="891" width="568" height="1" fill="#ffffff" /><rect x="1284" y="995" width="568" height="1" fill="#ffffff" /><rect x="1284" y="891" width="1" height="105" fill="#ffffff" /><rect x="1851" y="891" width="1" height="105" fill="#ffffff" /><clipPath id="cj"><rect x="1285" y="114" width="566" height="694"/></clipPath><g clip-path="url(#cj)"><rect x="1285" y="280" width="566" height="1" fill="#778899" /><line x1="1285" y1="114.5" x2="1851" y2="167.5" stroke="#ff0000" stroke-width="1" shape-rendering="crispEdges"/><rect x="1284" y="282" width="1" height="19" fill="#00ff00" /><rect x="1282" y="282" width="5" height="19" fill="#00ff00" /><rect x="1283" y="283" width="3" height="17" fill="#ffffff" /><rect x="1292" y="300" width="1" height="71" fill="#00ff00" /><rect x="1290" y="302" width="5" height="61" fill="#00ff00" /><rect x="1291" y="303" width="3" height="59" fill="#ffffff" /><rect x="1300" y="324" width="1" height="62" fill="#00ff00" /><rect x="1298" y="362" width="5" height="13" fill="#00ff00" /><rect x="1299" y="363" width="3" height="11" fill="#ffffff" /><rect x="1308" y="353" width="1" height="36" fill="#00ff00" /><rect x="1306" y="359" width="5" height="21" fill="#00ff00" /><rect x="1307" y="360" width="3" height="19" fill="#000000" /><rect x="1316" y="338" width="1" height="60" fill="#00ff00" /><rect x="1314" y="359" width="5" height="25" fill="#00ff00" /><rect x="1315" y="360" width="3" height="23" fill="#ffffff" /><rect x="1324" y="352" width="1" height="45" fill="#00ff00" /><rect x="1322" y="381" width="5" height="2" fill="#00ff00" /><rect x="1332" y="343" width="1" height="49" fill="#00ff00" /><rect x="1330" y="355" width="5" height="29" fill="#00ff00" /><rect x="1331" y="356" width="3" height="27" fill="#000000" /><rect x="1340" y="315" width="1" height="65" fill="#00ff00" /><rect x="1338" y="328" width="5" height="30" fill="#00ff00" /><rect x="1339" y="329" width="3" height="28" fill="#000000" /><rect x="1348" y="305" width="1" height="75" fill="#00ff00" /><rect x="1346" y="327" width="5" height="39" fill="#00ff00" /><rect x="1347" y="328" width="3" height="37" fill="#ffffff" /><rect x="1356" y="352" width="1" height="62" fill="#00ff00" /><rect x="1354" y="355" width="5" height="13" fill="#00ff00" /><rect x="1355" y="356" width="3" height="11" fill="#000000" /><rect x="1364" y="342" width="1" height="62" fill="#00ff00" /><rect x="1362" y="359" width="5" height="30" fill="#00ff00" /><rect x="1363" y="360" width="3" height="28" fill="#ffffff" /><rect x="1372" y="371" width="1" height="69" fill="#00ff00" /><rect x="1370" y="387" width="5" height="30" fill="#00ff00" /><rect x="1371" y="388" width="3" height="28" fill="#ffffff" /><rect x="1380" y="408" width="1" height="44" fill="#00ff00" /><rect x="1378" y="414" width="5" height="5" fill="#00ff00" /><rect x="1379" y="415" width="3" height="3" fill="#000000" /><rect x="1388" y="420" width="1" height="43" fill="#00ff00" /><rect x="1386" y="429" width="5" height="16" fill="#00ff00" /><rect x="1387" y="430" width="3" height="14" fill="#ffffff" /><rect x="1396" y="411" width="1" height="55" fill="#00ff00" /><rect x="1394" y="424" width="5" height="22" fill="#00ff00" /><rect x="1395" y="425" width="3" height="20" fill="#000000" /><rect x="1404" y="375" width="1" height="52" fill="#00ff00" /><rect x="1402" y="409" width="5" height="18" fill="#00ff00" /><rect x="1403" y="410" width="3" height="16" fill="#000000" /><rect x="1412" y="403" width="1" height="34" fill="#00ff00" /><rect x="1410" y="408" width="5" height="19" fill="#00ff00" /><rect x="1411" y="409" width="3" height="17" fill="#ffffff" /><rect x="1420" y="381" width="1" height="45" fill="#00ff00" /><rect x="1418" y="394" width="5" height="32" fill="#00ff00" /><rect x="1419" y="395" width="3" height="30" fill="#000000" /><rect x="1428" y="372" width="1" height="36" fill="#00ff00" /><rect x="1426" y="377" width="5" height="16" fill="#00ff00" /><rect x="1427" y="378" width="3" height="14" fill="#000000" /><rect x="1436" y="350" width="1" height="30" fill="#00ff00" /><rect x="1434" y="374" width="5" height="5" fill="#00ff00" /><rect x="1435" y="375" width="3" height="3" fill="#000000" /><rect x="1444" y="343" width="1" height="54" fill="#00ff00" /><rect x="1442" y="374" width="5" height="16" fill="#00ff00" /><rect x="1443" y="375" width="3" height="14" fill="#ffffff" /><rect x="1452" y="383" width="1" height="28" fill="#00ff00" /><rect x="1450" y="390" width="5" height="2" fill="#00ff00" /><rect x="1460" y="360" width="1" height="37" fill="#00ff00" /><rect x="1458" y="372" width="5" height="20" fill="#00ff00" /><rect x="1459" y="373" width="3" height="18" fill="#000000" /><rect x="1468" y="323" width="1" height="49" fill="#00ff00" /><rect x="1466" y="326" width="5" height="46" fill="#00ff00" /><rect x="1467" y="327" width="3" height="44" fill="#000000" /><rect x="1476" y="317" width="1" height="49" fill="#00ff00" /><rect x="1474" y="327" width="5" height="28" fill="#00ff00" /><rect x="1475" y="328" width="3" height="26" fill="#ffffff" /><rect x="1484" y="324" width="1" height="32" fill="#00ff00" /><rect x="1482" y="332" width="5" height="23" fill="#00ff00" /><rect x="1483" y="333" width="3" height="21" fill="#000000" /><rect x="1492" y="310" width="1" height="39" fill="#00ff00" /><rect x="1490" y="314" width="5" height="19" fill="#00ff00" /><rect x="1491" y="315" width="3" height="17" fill="#000000" /><rect x="1500" y="308" width="1" height="53" fill="#00ff00" /><rect x="1498" y="314" width="5" height="42" fill="#00ff00" /><rect x="1499" y="315" width="3" height="40" fill="#ffffff" /><rect x="1508" y="340" width="1" height="54" fill="#00ff00" /><rect x="1506" y="351" width="5" height="7" fill="#00ff00" /><rect x="1507" y="352" width="3" height="5" fill="#000000" /><rect x="1516" y="344" width="1" height="41" fill="#00ff00" /><rect x="1514" y="351" width="5" height="14" fill="#00ff00" /><rect x="1515" y="352" width="3" height="12" fill="#ffffff" /><rect x="1524" y="332" width="1" height="49" fill="#00ff00" /><rect x="1522" y="364" width="5" height="12" fill="#00ff00" /><rect x="1523" y="365" width="3" height="10" fill="#ffffff" /><rect x="1532" y="373" width="1" height="138" fill="#00ff00" /><rect x="1530" y="375" width="5" height="107" fill="#00ff00" /><rect x="1531" y="376" width="3" height="105" fill="#ffffff" /><rect x="1540" y="434" width="1" height="98" fill="#00ff00" /><rect x="1538" y="450" width="5" height="32" fill="#00ff00" /><rect x="1539" y="451" width="3" height="30" fill="#000000" /><rect x="1548" y="410" width="1" height="113" fill="#00ff00" /><rect x="1546" y="422" width="5" height="80" fill="#00ff00" /><rect x="1547" y="423" width="3" height="78" fill="#000000" /><rect x="1556" y="411" width="1" height="74" fill="#00ff00" /><rect x="1554" y="422" width="5" height="55" fill="#00ff00" /><rect x="1555" y="423" width="3" height="53" fill="#ffffff" /><rect x="1564" y="406" width="1" height="145" fill="#00ff00" /><rect x="1562" y="426" width="5" height="51" fill="#00ff00" /><rect x="1563" y="427" width="3" height="49" fill="#000000" /><rect x="1572" y="423" width="1" height="127" fill="#00ff00" /><rect x="1570" y="432" width="5" height="103" fill="#00ff00" /><rect x="1571" y="433" width="3" height="101" fill="#ffffff" /><rect x="1580" y="529" width="1" height="86" fill="#00ff00" /><rect x="1578" y="535" width="5" height="33" fill="#00ff00" /><rect x="1579" y="536" width="3" height="31" fill="#ffffff" /><rect x="1588" y="546" width="1" height="64" fill="#00ff00" /><rect x="1586" y="551" width="5" height="33" fill="#00ff00" /><rect x="1587" y="552" width="3" height="31" fill="#ffffff" /><rect x="1596" y="562" width="1" height="35" fill="#00ff00" /><rect x="1594" y="577" width="5" height="6" fill="#00ff00" /><rect x="1595" y="578" width="3" height="4" fill="#000000" /><rect x="1604" y="573" width="1" height="56" fill="#00ff00" /><rect x="1602" y="579" width="5" height="44" fill="#00ff00" /><rect x="1603" y="580" width="3" height="42" fill="#ffffff" /><rect x="1612" y="579" width="1" height="51" fill="#00ff00" /><rect x="1610" y="603" width="5" height="20" fill="#00ff00" /><rect x="1611" y="604" width="3" height="18" fill="#000000" /><rect x="1620" y="600" width="1" height="14" fill="#00ff00" /><rect x="1618" y="604" width="5" height="10" fill="#00ff00" /><rect x="1619" y="605" width="3" height="8" fill="#ffffff" /><rect x="1628" y="611" width="1" height="57" fill="#00ff00" /><rect x="1626" y="611" width="5" height="46" fill="#00ff00" /><rect x="1627" y="612" width="3" height="44" fill="#ffffff" /><rect x="1636" y="626" width="1" height="62" fill="#00ff00" /><rect x="1634" y="631" width="5" height="27" fill="#00ff00" /><rect x="1635" y="632" width="3" height="25" fill="#000000" /><rect x="1644" y="563" width="1" height="73" fill="#00ff00" /><rect x="1642" y="567" width="5" height="67" fill="#00ff00" /><rect x="1643" y="568" width="3" height="65" fill="#000000" /><rect x="1652" y="568" width="1" height="40" fill="#00ff00" /><rect x="1650" y="569" width="5" height="28" fill="#00ff00" /><rect x="1651" y="570" width="3" height="26" fill="#ffffff" /><rect x="1660" y="548" width="1" height="52" fill="#00ff00" /><rect x="1658" y="561" width="5" height="37" fill="#00ff00" /><rect x="1659" y="562" width="3" height="35" fill="#000000" /><rect x="1668" y="552" width="1" height="66" fill="#00ff00" /><rect x="1666" y="561" width="5" height="57" fill="#00ff00" /><rect x="1667" y="562" width="3" height="55" fill="#ffffff" /><rect x="1676" y="590" width="1" height="29" fill="#00ff00" /><rect x="1674" y="607" width="5" height="12" fill="#00ff00" /><rect x="1675" y="608" width="3" height="10" fill="#000000" /><rect x="1684" y="576" width="1" height="36" fill="#00ff00" /><rect x="1682" y="581" width="5" height="27" fill="#00ff00" /><rect x="1683" y="582" width="3" height="25" fill="#000000" /><rect x="1692" y="491" width="1" height="97" fill="#00ff00" /><rect x="1690" y="504" width="5" height="80" fill="#00ff00" /><rect x="1691" y="505" width="3" height="78" fill="#000000" /><rect x="1700" y="485" width="1" height="75" fill="#00ff00" /><rect x="1698" y="504" width="5" height="14" fill="#00ff00" /><rect x="1699" y="505" width="3" height="12" fill="#ffffff" /><rect x="1708" y="515" width="1" height="51" fill="#00ff00" /><rect x="1706" y="526" width="5" height="35" fill="#00ff00" /><rect x="1707" y="527" width="3" height="33" fill="#ffffff" /><rect x="1716" y="539" width="1" height="67" fill="#00ff00" /><rect x="1714" y="559" width="5" height="45" fill="#00ff00" /><rect x="1715" y="560" width="3" height="43" fill="#ffffff" /><rect x="1724" y="549" width="1" height="56" fill="#00ff00" /><rect x="1722" y="555" width="5" height="49" fill="#00ff00" /><rect x="1723" y="556" width="3" height="47" fill="#000000" /><rect x="1732" y="476" width="1" height="93" fill="#00ff00" /><rect x="1730" y="485" width="5" height="73" fill="#00ff00" /><rect x="1731" y="486" width="3" height="71" fill="#000000" /><rect x="1740" y="476" width="1" height="47" fill="#00ff00" /><rect x="1738" y="485" width="5" height="20" fill="#00ff00" /><rect x="1739" y="486" width="3" height="18" fill="#ffffff" /><rect x="1748" y="394" width="1" height="100" fill="#00ff00" /><rect x="1746" y="401" width="5" height="70" fill="#00ff00" /><rect x="1747" y="402" width="3" height="68" fill="#000000" /><rect x="1756" y="400" width="1" height="38" fill="#00ff00" /><rect x="1754" y="400" width="5" height="34" fill="#00ff00" /><rect x="1755" y="401" width="3" height="32" fill="#ffffff" /><rect x="1764" y="426" width="1" height="71" fill="#00ff00" /><rect x="1762" y="434" width="5" height="24" fill="#00ff00" /><rect x="1763" y="435" width="3" height="22" fill="#ffffff" /><rect x="1772" y="457" width="1" height="47" fill="#00ff00" /><rect x="1770" y="459" width="5" height="36" fill="#00ff00" /><rect x="1771" y="460" width="3" height="34" fill="#ffffff" /><rect x="1780" y="479" width="1" height="41" fill="#00ff00" /><rect x="1778" y="494" width="5" height="2" fill="#00ff00" /><rect x="1788" y="500" width="1" height="29" fill="#00ff00" /><rect x="1786" y="508" width="5" height="14" fill="#00ff00" /><rect x="1787" y="509" width="3" height="12" fill="#ffffff" /><rect x="1796" y="498" width="1" height="50" fill="#00ff00" /><rect x="1794" y="522" width="5" height="12" fill="#00ff00" /><rect x="1795" y="523" width="3" height="10" fill="#ffffff" /><rect x="1804" y="530" width="1" height="45" fill="#00ff00" /><rect x="1802" y="533" width="5" height="28" fill="#00ff00" /><rect x="1803" y="534" width="3" height="26" fill="#ffffff" /><rect x="1812" y="535" width="1" height="55" fill="#00ff00" /><rect x="1810" y="549" width="5" height="13" fill="#00ff00" /><rect x="1811" y="550" width="3" height="11" fill="#000000" /><rect x="1820" y="546" width="1" height="57" fill="#00ff00" /><rect x="1818" y="550" width="5" height="48" fill="#00ff00" /><rect x="1819" y="551" width="3" height="46" fill="#ffffff" /><rect x="1828" y="579" width="1" height="30" fill="#00ff00" /><rect x="1826" y="588" width="5" height="13" fill="#00ff00" /><rect x="1827" y="589" width="3" height="11" fill="#000000" /><rect x="1836" y="533" width="1" height="80" fill="#00ff00" /><rect x="1834" y="538" width="5" height="53" fill="#00ff00" /><rect x="1835" y="539" width="3" height="51" fill="#000000" /><rect x="1844" y="513" width="1" height="43" fill="#00ff00" /><rect x="1842" y="522" width="5" height="18" fill="#00ff00" /><rect x="1843" y="523" width="3" height="16" fill="#000000" /><g transform="translate(1289,119)"><rect x="0.5" y="0.5" width="7" height="10" fill="#2a1410" stroke="#f05050"/><rect x="7.5" y="0.5" width="7" height="10" fill="#061a30" stroke="#3388f0"/><rect x="2" y="2.2" width="5" height="1.2" fill="#f05050"/><rect x="2" y="5" width="5" height="1.2" fill="#f05050"/><rect x="2" y="8" width="5" height="1.2" fill="#f05050"/><rect x="8" y="2.2" width="5" height="1.2" fill="#3388f0"/><rect x="8" y="5" width="5" height="1.2" fill="#3388f0"/><rect x="8" y="8" width="5" height="1.2" fill="#3388f0"/><path d="M21.5,0.5 h3 v5 h3.5 v5 h-6.5 z" fill="#3a1a10" stroke="#f05050"/><path d="M29.5,10.5 v-5 h3.5 v-5 h2.8 v10 z" fill="#0a2040" stroke="#3388f0"/><rect x="26.5" y="0.3" width="4.5" height="2.3" rx="1.1" fill="none" stroke="#b0b0b0" stroke-width="0.9"/></g><text x="1330" y="128" fill="#ffffff" font-size="10.5" text-anchor="start" textLength="145" lengthAdjust="spacingAndGlyphs" xml:space="preserve" >USDJPY, Daily:  US Dollar vs Yen</text><polygon points="1680,114 1689,114 1684.5,119" fill="#8899aa"/><rect x="1287" y="793" width="148" height="14" fill="#0000ff" /><text x="1305.3" y="804" fill="#ffffff" font-size="12.5" text-anchor="start" textLength="110" lengthAdjust="spacingAndGlyphs" xml:space="preserve" >whitetigertools.com</text></g><rect x="1852" y="136" width="4" height="1" fill="#ffffff" /><text x="1857" y="140" fill="#ffffff" font-size="9.8" text-anchor="start" textLength="32" lengthAdjust="spacingAndGlyphs" xml:space="preserve" >156.370</text><rect x="1852" y="168" width="4" height="1" fill="#ffffff" /><text x="1857" y="172" fill="#ffffff" font-size="9.8" text-anchor="start" textLength="32" lengthAdjust="spacingAndGlyphs" xml:space="preserve" >155.410</text><rect x="1852" y="200" width="4" height="1" fill="#ffffff" /><text x="1857" y="204" fill="#ffffff" font-size="9.8" text-anchor="start" textLength="32" lengthAdjust="spacingAndGlyphs" xml:space="preserve" >154.450</text><rect x="1852" y="232" width="4" height="1" fill="#ffffff" /><text x="1857" y="236" fill="#ffffff" font-size="9.8" text-anchor="start" textLength="32" lengthAdjust="spacingAndGlyphs" xml:space="preserve" >153.490</text><rect x="1852" y="264" width="4" height="1" fill="#ffffff" /><text x="1857" y="268" fill="#ffffff" font-size="9.8" text-anchor="start" textLength="32" lengthAdjust="spacingAndGlyphs" xml:space="preserve" >152.530</text><rect x="1852" y="296" width="4" height="1" fill="#ffffff" /><text x="1857" y="300" fill="#ffffff" font-size="9.8" text-anchor="start" textLength="32" lengthAdjust="spacingAndGlyphs" xml:space="preserve" >151.570</text><rect x="1852" y="328" width="4" height="1" fill="#ffffff" /><text x="1857" y="332" fill="#ffffff" font-size="9.8" text-anchor="start" textLength="32" lengthAdjust="spacingAndGlyphs" xml:space="preserve" >150.610</text><rect x="1852" y="360" width="4" height="1" fill="#ffffff" /><text x="1857" y="364" fill="#ffffff" font-size="9.8" text-anchor="start" textLength="32" lengthAdjust="spacingAndGlyphs" xml:space="preserve" >149.650</text><rect x="1852" y="392" width="4" height="1" fill="#ffffff" /><text x="1857" y="396" fill="#ffffff" font-size="9.8" text-anchor="start" textLength="32" lengthAdjust="spacingAndGlyphs" xml:space="preserve" >148.690</text><rect x="1852" y="424" width="4" height="1" fill="#ffffff" /><text x="1857" y="428" fill="#ffffff" font-size="9.8" text-anchor="start" textLength="32" lengthAdjust="spacingAndGlyphs" xml:space="preserve" >147.730</text><rect x="1852" y="456" width="4" height="1" fill="#ffffff" /><text x="1857" y="460" fill="#ffffff" font-size="9.8" text-anchor="start" textLength="32" lengthAdjust="spacingAndGlyphs" xml:space="preserve" >146.770</text><rect x="1852" y="488" width="4" height="1" fill="#ffffff" /><text x="1857" y="492" fill="#ffffff" font-size="9.8" text-anchor="start" textLength="32" lengthAdjust="spacingAndGlyphs" xml:space="preserve" >145.810</text><rect x="1852" y="520" width="4" height="1" fill="#ffffff" /><text x="1857" y="524" fill="#ffffff" font-size="9.8" text-anchor="start" textLength="32" lengthAdjust="spacingAndGlyphs" xml:space="preserve" >144.850</text><rect x="1852" y="552" width="4" height="1" fill="#ffffff" /><text x="1857" y="556" fill="#ffffff" font-size="9.8" text-anchor="start" textLength="32" lengthAdjust="spacingAndGlyphs" xml:space="preserve" >143.890</text><rect x="1852" y="584" width="4" height="1" fill="#ffffff" /><text x="1857" y="588" fill="#ffffff" font-size="9.8" text-anchor="start" textLength="32" lengthAdjust="spacingAndGlyphs" xml:space="preserve" >142.930</text><rect x="1852" y="616" width="4" height="1" fill="#ffffff" /><text x="1857" y="620" fill="#ffffff" font-size="9.8" text-anchor="start" textLength="32" lengthAdjust="spacingAndGlyphs" xml:space="preserve" >141.970</text><rect x="1852" y="648" width="4" height="1" fill="#ffffff" /><text x="1857" y="652" fill="#ffffff" font-size="9.8" text-anchor="start" textLength="32" lengthAdjust="spacingAndGlyphs" xml:space="preserve" >141.010</text><rect x="1852" y="680" width="4" height="1" fill="#ffffff" /><text x="1857" y="684" fill="#ffffff" font-size="9.8" text-anchor="start" textLength="32" lengthAdjust="spacingAndGlyphs" xml:space="preserve" >140.050</text><rect x="1852" y="712" width="4" height="1" fill="#ffffff" /><text x="1857" y="716" fill="#ffffff" font-size="9.8" text-anchor="start" textLength="32" lengthAdjust="spacingAndGlyphs" xml:space="preserve" >139.090</text><rect x="1852" y="744" width="4" height="1" fill="#ffffff" /><text x="1857" y="748" fill="#ffffff" font-size="9.8" text-anchor="start" textLength="32" lengthAdjust="spacingAndGlyphs" xml:space="preserve" >138.130</text><rect x="1852" y="776" width="4" height="1" fill="#ffffff" /><text x="1857" y="780" fill="#ffffff" font-size="9.8" text-anchor="start" textLength="32" lengthAdjust="spacingAndGlyphs" xml:space="preserve" >137.170</text><rect x="1854" y="275" width="39" height="11" fill="#778899" /><text x="1857" y="284" fill="#000000" font-size="9.8" text-anchor="start" textLength="32" lengthAdjust="spacingAndGlyphs" xml:space="preserve" >152.045</text><clipPath id="cjv"><rect x="1285" y="812" width="566" height="77"/></clipPath><g clip-path="url(#cjv)"><polyline points="1285,864.4 1301.7,874.3 1315.3,877.3 1333.4,870.9 1345.5,871.2 1359,874.7 1372.7,874.3 1389.4,872 1403,869.4 1413.5,863.7 1427,855.4 1439.2,852.3 1460.4,851.6 1475.5,845.5 1486,832.7 1498.2,822.9 1508.8,819.8 1517.9,820.9 1530,829.7 1548,851.6 1560.2,858.7 1580.1,858.4 1584.7,859.9 1602.8,874.3 1614.9,879.9 1627,882.3 1642.1,879.5 1655.7,876.5 1676.9,877.3 1690.5,870.5 1701.1,858.4 1708.7,846.3 1716.2,836.5 1725.3,831.2 1740.4,829.4 1755.5,822.4 1763.1,820.6 1776.7,820.6 1788.8,825.1 1797.9,831.2 1811.5,844.8 1822,850.1 1834.2,853.8 1843.5,858.7" fill="none" stroke="#6e6e6e" stroke-width="1" stroke-linejoin="miter" shape-rendering="crispEdges"/><polyline points="1285,871.2 1301.7,879.5 1309.2,878 1316.8,871.2 1325,868.2 1332,869.4 1348.5,876.2 1357.6,876.2 1372,871.2 1389.4,872 1397,866.7 1409,858 1418,853.8 1427,851.3 1440.8,851.6 1452.8,853.5 1460.4,851.6 1469.5,841.8 1484.6,822.9 1493.7,817.3 1501.2,817.3 1513.3,825.1 1525.4,836.5 1540.5,859.9 1548,862.2 1564.3,855 1571,858.1 1583.2,869 1598.3,880.3 1604.3,882.6 1621,882.3 1637.6,877.3 1642.1,876.2 1655.7,876.5 1664.8,877.3 1676.9,875.5 1686,866.7 1699.6,838.7 1708.7,829.4 1713.2,829.4 1723.8,832.7 1738.9,824.4 1748,819.4 1760,819.4 1773.7,821.8 1779.7,825.1 1788.8,832.7 1794.8,841 1803.9,850.1 1811.5,851.1 1819,849.3 1826.6,853.8 1837.2,863.7 1844,868.7" fill="none" stroke="#008000" stroke-width="1" stroke-linejoin="miter" shape-rendering="crispEdges"/><text x="1287.2" y="823" fill="#ffffff" font-size="10.5" text-anchor="start" textLength="84.8" lengthAdjust="spacingAndGlyphs" xml:space="preserve" >RVI(12) 0.027 0.077</text></g><rect x="1852" y="812" width="4" height="1" fill="#ffffff" /><rect x="1852" y="888" width="4" height="1" fill="#ffffff" /><text x="1857" y="820" fill="#ffffff" font-size="9.8" text-anchor="start" textLength="22" lengthAdjust="spacingAndGlyphs" xml:space="preserve" >0.238</text><text x="1857" y="888" fill="#ffffff" font-size="9.8" text-anchor="start" textLength="26" lengthAdjust="spacingAndGlyphs" xml:space="preserve" >-0.246</text><clipPath id="cjr"><rect x="1285" y="892" width="566" height="103"/></clipPath><g clip-path="url(#cjr)"><line x1="1284" y1="929.5" x2="1851" y2="929.5" stroke="#c8c8c8" stroke-width="1" stroke-dasharray="3,3"/><line x1="1284" y1="982.5" x2="1851" y2="982.5" stroke="#c8c8c8" stroke-width="1" stroke-dasharray="3,3"/><polyline points="1285,959 1292,974 1300,977 1308,970 1316,975.5 1324,974 1332,961.5 1340,948.5 1348,960 1356,956 1364,965 1372,973 1380,972 1388,979 1396,969 1404,961 1412,966 1420,950 1428,941.4 1436,940.4 1444,946.3 1452,947 1460,937 1468,915 1476,928 1484,920 1492,912.8 1500,930.7 1508,929.7 1516,934 1524,939.8 1532,975.2 1540,961 1548,948.5 1556,963 1564,943.7 1572,968 1580,973 1588,977 1596,976 1604.5,983.7 1612.6,976.2 1620,977.8 1628.9,986 1637,975.5 1644.5,951 1652.6,957.6 1660.8,945.3 1668.9,959.3 1677,955 1684.2,946.3 1692.3,923.2 1700.4,927.4 1708.6,938 1716.7,949.2 1724.8,932.3 1732.3,917.6 1740.4,921.9 1748.6,900.7 1756.7,908.9 1764.5,914.4 1773,924.8 1781,925.1 1788.9,931.6 1797,936.2 1805,943 1812.6,939.8 1820.8,951.8 1829,949.2 1837,932.3 1843.5,929" fill="none" stroke="#00f0ff" stroke-width="1" stroke-linejoin="miter" shape-rendering="crispEdges"/><text x="1287.2" y="904" fill="#ffffff" font-size="10.5" text-anchor="start" textLength="57.8" lengthAdjust="spacingAndGlyphs" xml:space="preserve" >RSI(14) 58.18</text></g><rect x="1852" y="892" width="4" height="1" fill="#ffffff" /><rect x="1852" y="929" width="4" height="1" fill="#ffffff" /><rect x="1852" y="982" width="4" height="1" fill="#ffffff" /><rect x="1852" y="995" width="4" height="1" fill="#ffffff" /><text x="1857" y="900" fill="#ffffff" font-size="9.8" text-anchor="start" textLength="22" lengthAdjust="spacingAndGlyphs" xml:space="preserve" >64.36</text><text x="1857" y="933" fill="#ffffff" font-size="9.8" text-anchor="start" textLength="22" lengthAdjust="spacingAndGlyphs" xml:space="preserve" >50.00</text><text x="1857" y="986" fill="#ffffff" font-size="9.8" text-anchor="start" textLength="22" lengthAdjust="spacingAndGlyphs" xml:space="preserve" >30.00</text><text x="1857" y="993" fill="#ffffff" font-size="9.8" text-anchor="start" textLength="22" lengthAdjust="spacingAndGlyphs" xml:space="preserve" >24.91</text><rect x="1284" y="995" width="1" height="6" fill="#ffffff" /><text x="1285" y="1008" fill="#ffffff" font-size="9.8" text-anchor="start" textLength="51" lengthAdjust="spacingAndGlyphs" xml:space="preserve" >19 Feb 2025</text><rect x="1348" y="995" width="1" height="6" fill="#ffffff" /><text x="1349" y="1008" fill="#ffffff" font-size="9.8" text-anchor="start" textLength="47" lengthAdjust="spacingAndGlyphs" xml:space="preserve" >3 Mar 2025</text><rect x="1412" y="995" width="1" height="6" fill="#ffffff" /><text x="1413" y="1008" fill="#ffffff" font-size="9.8" text-anchor="start" textLength="52" lengthAdjust="spacingAndGlyphs" xml:space="preserve" >13 Mar 2025</text><rect x="1476" y="995" width="1" height="6" fill="#ffffff" /><text x="1477" y="1008" fill="#ffffff" font-size="9.8" text-anchor="start" textLength="52" lengthAdjust="spacingAndGlyphs" xml:space="preserve" >25 Mar 2025</text><rect x="1540" y="995" width="1" height="6" fill="#ffffff" /><text x="1541" y="1008" fill="#ffffff" font-size="9.8" text-anchor="start" textLength="45" lengthAdjust="spacingAndGlyphs" xml:space="preserve" >4 Apr 2025</text><rect x="1604" y="995" width="1" height="6" fill="#ffffff" /><text x="1605" y="1008" fill="#ffffff" font-size="9.8" text-anchor="start" textLength="50" lengthAdjust="spacingAndGlyphs" xml:space="preserve" >16 Apr 2025</text><rect x="1668" y="995" width="1" height="6" fill="#ffffff" /><text x="1669" y="1008" fill="#ffffff" font-size="9.8" text-anchor="start" textLength="50" lengthAdjust="spacingAndGlyphs" xml:space="preserve" >28 Apr 2025</text><rect x="1732" y="995" width="1" height="6" fill="#ffffff" /><text x="1733" y="1008" fill="#ffffff" font-size="9.8" text-anchor="start" textLength="48" lengthAdjust="spacingAndGlyphs" xml:space="preserve" >8 May 2025</text><rect x="1796" y="995" width="1" height="6" fill="#ffffff" /><text x="1797" y="1008" fill="#ffffff" font-size="9.8" text-anchor="start" textLength="53" lengthAdjust="spacingAndGlyphs" xml:space="preserve" >20 May 2025</text></svg><svg class="a" style="left:0;top:0" width="1918" height="1030" viewBox="0 0 1918 1030"><text x="38" y="20" fill="#ffffff" font-size="12.3" textLength="475.5" lengthAdjust="spacingAndGlyphs" >5031468576 - MetaQuotes-Demo: Cuenta Demo - Hedge - MetaQuotes Ltd. - EURUSD,H1</text><text x="19.2" y="45" fill="#d8d8d8" font-size="12.3" textLength="40.5" lengthAdjust="spacingAndGlyphs" >Archivo</text><text x="81.7" y="45" fill="#d8d8d8" font-size="12.3" textLength="16.099999999999994" lengthAdjust="spacingAndGlyphs" >Ver</text><text x="120" y="45" fill="#d8d8d8" font-size="12.3" textLength="38.80000000000001" lengthAdjust="spacingAndGlyphs" >Insertar</text><text x="181" y="45" fill="#d8d8d8" font-size="12.3" textLength="42.80000000000001" lengthAdjust="spacingAndGlyphs" >Gráficos</text><text x="245.8" y="45" fill="#d8d8d8" font-size="12.3" textLength="70.89999999999998" lengthAdjust="spacingAndGlyphs" >Herramientas</text><text x="339.4" y="45" fill="#d8d8d8" font-size="12.3" textLength="41.5" lengthAdjust="spacingAndGlyphs" >Ventana</text><text x="403" y="45" fill="#d8d8d8" font-size="12.3" textLength="34" lengthAdjust="spacingAndGlyphs" >Ayuda</text><text x="233" y="72" fill="#dcdcdc" font-size="12.3" textLength="103.5" lengthAdjust="spacingAndGlyphs" >Trading algorítmico</text><text x="373.4" y="72" fill="#dcdcdc" font-size="12.3" textLength="69.10000000000002" lengthAdjust="spacingAndGlyphs" >Nueva Orden</text><text x="1123.85" y="72" fill="#3d8ee8" font-size="12.2" textLength="15.3" lengthAdjust="spacingAndGlyphs" stroke="#3d8ee8" stroke-width="0.25">M1</text><text x="1155.5" y="72" fill="#3d8ee8" font-size="12.2" textLength="16" lengthAdjust="spacingAndGlyphs" stroke="#3d8ee8" stroke-width="0.25">M3</text><text x="1187.5" y="72" fill="#3d8ee8" font-size="12.2" textLength="16" lengthAdjust="spacingAndGlyphs" stroke="#3d8ee8" stroke-width="0.25">M5</text><text x="1219.5" y="72" fill="#3d8ee8" font-size="12.2" textLength="16" lengthAdjust="spacingAndGlyphs" stroke="#3d8ee8" stroke-width="0.25">M6</text><text x="1248.3" y="72" fill="#3d8ee8" font-size="12.2" textLength="22.4" lengthAdjust="spacingAndGlyphs" stroke="#3d8ee8" stroke-width="0.25">M12</text><text x="1280.3" y="72" fill="#3d8ee8" font-size="12.2" textLength="22.4" lengthAdjust="spacingAndGlyphs" stroke="#3d8ee8" stroke-width="0.25">M10</text><text x="1312.3" y="72" fill="#3d8ee8" font-size="12.2" textLength="22.4" lengthAdjust="spacingAndGlyphs" stroke="#3d8ee8" stroke-width="0.25">M15</text><text x="1344.3" y="72" fill="#3d8ee8" font-size="12.2" textLength="22.4" lengthAdjust="spacingAndGlyphs" stroke="#3d8ee8" stroke-width="0.25">M20</text><text x="1376.3" y="72" fill="#3d8ee8" font-size="12.2" textLength="22.4" lengthAdjust="spacingAndGlyphs" stroke="#3d8ee8" stroke-width="0.25">M30</text><text x="1413.25" y="72" fill="#3d8ee8" font-size="12.2" textLength="12.5" lengthAdjust="spacingAndGlyphs" stroke="#3d8ee8" stroke-width="0.25">H1</text><text x="1444.4" y="72" fill="#3d8ee8" font-size="12.2" textLength="14.2" lengthAdjust="spacingAndGlyphs" stroke="#3d8ee8" stroke-width="0.25">H2</text><text x="1476.5" y="72" fill="#3d8ee8" font-size="12.2" textLength="14" lengthAdjust="spacingAndGlyphs" stroke="#3d8ee8" stroke-width="0.25">H3</text><text x="1508.25" y="72" fill="#3d8ee8" font-size="12.2" textLength="14.5" lengthAdjust="spacingAndGlyphs" stroke="#3d8ee8" stroke-width="0.25">H4</text><text x="1540.5" y="72" fill="#3d8ee8" font-size="12.2" textLength="14" lengthAdjust="spacingAndGlyphs" stroke="#3d8ee8" stroke-width="0.25">D1</text><text x="1570.0" y="72" fill="#3d8ee8" font-size="12.2" textLength="19" lengthAdjust="spacingAndGlyphs" stroke="#3d8ee8" stroke-width="0.25">MN</text><text x="1603.25" y="72" fill="#3d8ee8" font-size="12.2" textLength="16.5" lengthAdjust="spacingAndGlyphs" stroke="#3d8ee8" stroke-width="0.25">W1</text><text x="37.7" y="101" fill="#e8e8e8" font-size="12.3" textLength="59" lengthAdjust="spacingAndGlyphs">EURUSD,H1</text><text x="671.7" y="101" fill="#8e8e8e" font-size="12.3" textLength="75" lengthAdjust="spacingAndGlyphs">USDCHF,Daily</text><text x="1305.7" y="101" fill="#8e8e8e" font-size="12.3" textLength="69" lengthAdjust="spacingAndGlyphs">USDJPY,Daily</text></svg></body></html>
